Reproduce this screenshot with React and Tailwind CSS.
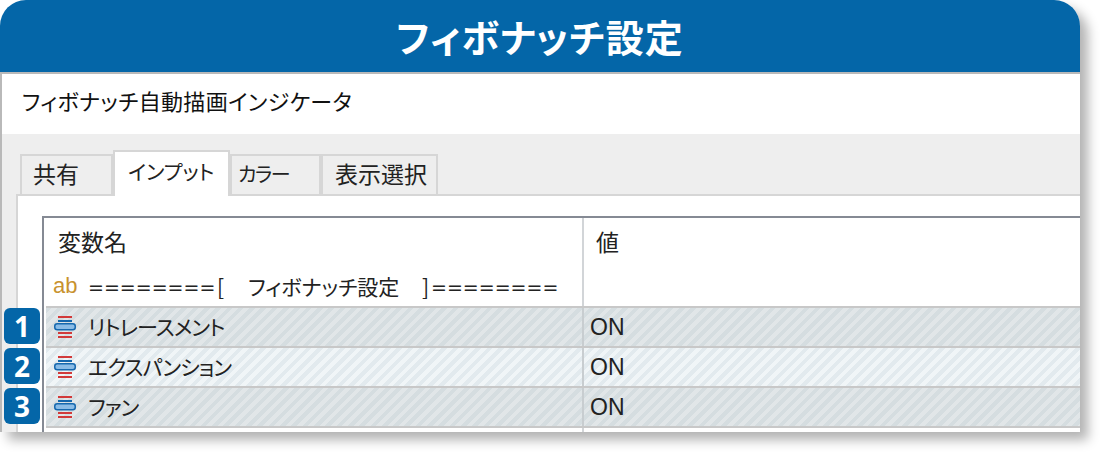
const JP = "font-['Noto_Sans_CJK_JP','Noto_Sans_CJK_SC',sans-serif]";
const DARK_STRIPES =
  "bg-[repeating-linear-gradient(135deg,#d5dde0_0px,#d5dde0_4px,#e1e6e8_4px,#e1e6e8_8px)]";
const LIGHT_STRIPES =
  "bg-[repeating-linear-gradient(135deg,#e2eaee_0px,#e2eaee_4px,#f0f5f7_4px,#f0f5f7_8px)]";

const TABS = [
  { label: "共有", cls: "w-[93px] pl-[11px] text-[23px]" },
  { label: "インプット", cls: "w-[117px] pl-[13px] text-[20.5px]", active: true },
  { label: "カラー", cls: "w-[91px] pl-[6px] text-[20px] tracking-[-1.5px]" },
  { label: "表示選択", cls: "w-[117px] pl-[12px] text-[23px]" },
];

const ROWS = [
  { n: 1, label: "リトレースメント", stripes: DARK_STRIPES },
  { n: 2, label: "エクスパンション", stripes: LIGHT_STRIPES },
  { n: 3, label: "ファン", stripes: DARK_STRIPES },
];

function LevelIcon() {
  return (
    <svg width="22" height="22" viewBox="0 0 22 22" className="shrink-0">
      <rect x="4" y="0" width="14" height="2" fill="#d23a3a" />
      <rect x="4" y="4" width="14" height="2" fill="#1668ae" />
      <rect x="0.75" y="7.75" width="20.5" height="6" rx="2.5" fill="#8bbce6" stroke="#1668ae" strokeWidth="1.5" />
      <rect x="4" y="16" width="14" height="2" fill="#d23a3a" />
      <rect x="4" y="20" width="14" height="2" fill="#d23a3a" />
    </svg>
  );
}

export default function App() {
  return (
    <div className="w-[1100px] h-[452px] bg-white">
      <div className={`relative w-[1080px] h-[432px] rounded-t-[26px] bg-white shadow-[8px_8px_12px_rgba(0,0,0,0.3)] ${JP} [font-feature-settings:"palt"]`}>
        <div className="h-[72px] rounded-t-[26px] bg-[#0466a8] text-white text-[38px] tracking-[1px] font-bold leading-[72px] text-center">
          フィボナッチ設定
        </div>

        <div className="h-[360px] border-t-2 border-l-2 border-[#b9b9b9] overflow-hidden flex flex-col">
          <div className="h-[60px] shrink-0 pl-[20px] pb-[7px] flex items-center text-[22px] tracking-[0.35px] text-[#111]">
            フィボナッチ自動描画インジケータ
          </div>

          <div className="flex-1 bg-[#eeeeee] flex flex-col">
            <div className="h-[60px] shrink-0 pl-[18px] flex items-end">
              {TABS.map((t) => (
                <div
                  key={t.label}
                  className={`${t.cls} flex items-center border-2 border-b-0 border-[#d6d6d6] text-[#222] ${
                    t.active ? "relative z-10 h-[46px] -mb-[2px] bg-white pb-[6px]" : "h-[40px] pb-[3px]"
                  }`}
                >
                  {t.label}
                </div>
              ))}
            </div>

            <div className="flex-1 ml-[14px] bg-white border-t-2 border-l-2 border-[#d6d6d6] pt-[20px] pl-[24px]">
              <div className="h-full border-t-2 border-l-2 border-[#858a94] pl-[2px] flex flex-col">
                <div className="h-[50px] shrink-0 flex text-[23px] text-[#222]">
                  <div className="w-[536px] pl-[12px] pt-[6px]">変数名</div>
                  <div className="flex-1 border-l-2 border-[#d2d5d8] pl-[12px] pt-[6px]">値</div>
                </div>

                <div className="h-[38px] shrink-0 flex">
                  <div className="w-[536px] pl-[7px] flex items-center text-[21px] text-[#222]">
                    <span className="w-[35px] shrink-0 font-['Liberation_Sans',sans-serif] text-[22px] text-[#c8922e] -mt-[4px]">ab</span>
                    <span className="w-[129px] shrink-0 font-['DejaVu_Sans',sans-serif] text-[19px]">========</span>
                    <span className="w-[31px] shrink-0">[</span>
                    <span className="w-[174px] shrink-0">フィボナッチ設定</span>
                    <span className="w-[9px] shrink-0">]</span>
                    <span className="shrink-0 font-['DejaVu_Sans',sans-serif] text-[19px]">========</span>
                  </div>
                  <div className="flex-1 border-l-2 border-[#d2d5d8]" />
                </div>

                {ROWS.map((r) => (
                  <div key={r.n} className={`h-[40px] shrink-0 flex border-t-2 border-[#c8c8c8] ${r.stripes} text-[21px] tracking-[-0.9px] text-[#222]`}>
                    <div className="w-[536px] pl-[8px] flex items-center gap-[12px]">
                      <LevelIcon />
                      <span className="-mt-[1px]">{r.label}</span>
                    </div>
                    <div className="flex-1 border-l-2 border-[#c8cdd0] pl-[6px] flex items-center text-[23px] tracking-normal font-['Liberation_Sans',sans-serif]">
                      ON
                    </div>
                  </div>
                ))}

                <div className="h-[6px] shrink-0 flex border-t-2 border-[#c8c8c8]">
                  <div className="w-[536px]" />
                  <div className="flex-1 border-l-2 border-[#d2d5d8]" />
                </div>
              </div>
            </div>
          </div>
        </div>

        {ROWS.map((r, i) => (
          <div
            key={r.n}
            className={`absolute left-[4px] ${["top-[308px]", "top-[348px]", "top-[388px]"][i]} w-[36px] h-[36px] rounded-[6px] bg-[#0466a8] text-white text-[28px] font-bold leading-[36px] text-center font-['Open_Sans',sans-serif]`}
          >
            {r.n}
          </div>
        ))}
      </div>
    </div>
  );
}
